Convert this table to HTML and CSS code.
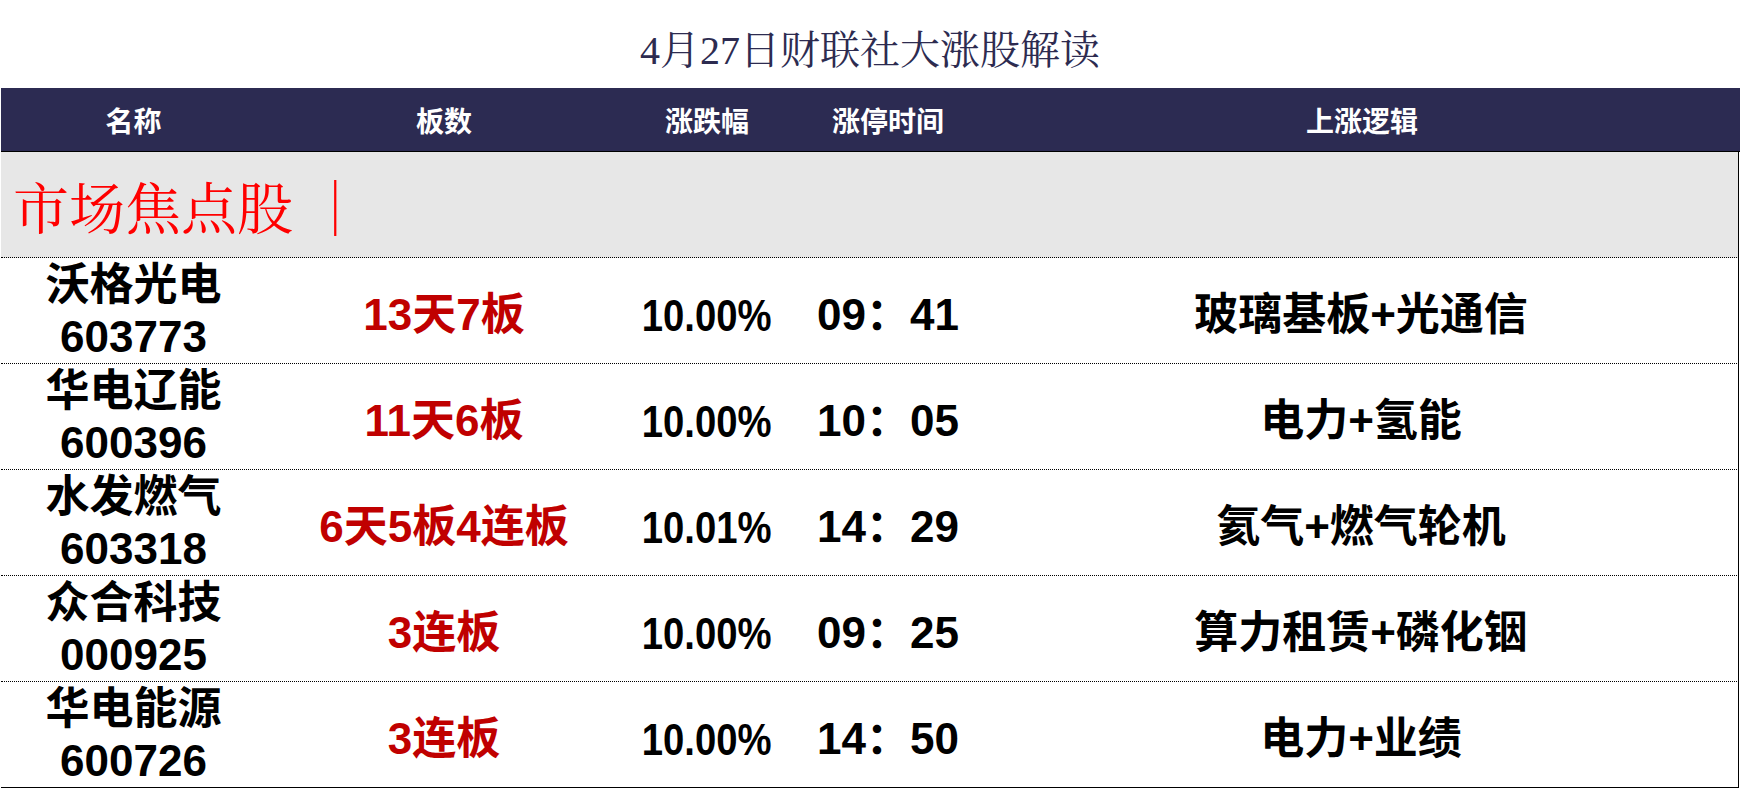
FILE: index.html
```html
<!DOCTYPE html>
<html lang="zh-CN">
<head>
<meta charset="utf-8">
<title>4月27日财联社大涨股解读</title>
<link rel="stylesheet" href="styles.css">
</head>
<body>
<div class="page">
  <div class="title">4月27日财联社大涨股解读</div>
  <div class="table">
    <div class="head">
      <div class="hc">名称</div>
      <div class="hc">板数</div>
      <div class="hc">涨跌幅</div>
      <div class="hc">涨停时间</div>
      <div class="hc">上涨逻辑</div>
    </div>
    <div class="section"><span class="section-text">市场焦点股 ｜</span></div>
    <div class="row">
      <div class="cell name"><span>沃格光电</span><span>603773</span></div>
      <div class="cell board">13天7板</div>
      <div class="cell pct"><span class="narrow">10.00%</span></div>
      <div class="cell time">09：41</div>
      <div class="cell logic">玻璃基板+光通信</div>
    </div>
    <div class="row">
      <div class="cell name"><span>华电辽能</span><span>600396</span></div>
      <div class="cell board">11天6板</div>
      <div class="cell pct"><span class="narrow">10.00%</span></div>
      <div class="cell time">10：05</div>
      <div class="cell logic">电力+氢能</div>
    </div>
    <div class="row">
      <div class="cell name"><span>水发燃气</span><span>603318</span></div>
      <div class="cell board">6天5板4连板</div>
      <div class="cell pct"><span class="narrow">10.01%</span></div>
      <div class="cell time">14：29</div>
      <div class="cell logic">氦气+燃气轮机</div>
    </div>
    <div class="row">
      <div class="cell name"><span>众合科技</span><span>000925</span></div>
      <div class="cell board">3连板</div>
      <div class="cell pct"><span class="narrow">10.00%</span></div>
      <div class="cell time">09：25</div>
      <div class="cell logic">算力租赁+磷化铟</div>
    </div>
    <div class="row last">
      <div class="cell name"><span>华电能源</span><span>600726</span></div>
      <div class="cell board">3连板</div>
      <div class="cell pct"><span class="narrow">10.00%</span></div>
      <div class="cell time">14：50</div>
      <div class="cell logic">电力+业绩</div>
    </div>
  </div>
</div>
</body>
</html>
```

FILE: styles.css
```css
html, body {
  margin: 0;
  padding: 0;
  background: #ffffff;
}

.page {
  width: 1740px;
  height: 788px;
  overflow: hidden;
  font-family: "Liberation Sans", "Noto Sans CJK SC", sans-serif;
}

.title {
  height: 88px;
  display: flex;
  align-items: center;
  justify-content: center;
  padding-top: 4px;
  box-sizing: border-box;
  font-family: "Liberation Serif", "Noto Serif CJK SC", "Noto Sans CJK SC", serif;
  font-weight: 400;
  font-size: 40px;
  color: #2d2b50;
}

.table {
  margin-left: 1px;
}

.head {
  display: grid;
  grid-template-columns: 265px 356px 170px 192px 1fr;
  height: 63px;
  background: #2c2b52;
  border-bottom: 1px solid #000;
}

.hc {
  display: flex;
  align-items: center;
  justify-content: center;
  color: #ffffff;
  font-family: "Noto Sans CJK SC", sans-serif;
  font-weight: 700;
  font-size: 28px;
}

.section {
  height: 105px;
  background: #e7e7e7;
  border-right: 1px solid #000;
  border-bottom: 1px dotted #000;
  width: 1725px;
  display: flex;
  align-items: center;
  padding-left: 12px;
}

.section-text {
  font-family: "Noto Serif CJK SC", "Noto Sans CJK SC", serif;
  font-size: 56px;
  color: #ff0000;
  line-height: 1;
}

.row {
  display: grid;
  grid-template-columns: 265px 356px 170px 192px 1fr;
  height: 105px;
  width: 1737px;
  border-right: 1px solid #000;
  border-bottom: 1px dotted #000;
}

.row.last {
  border-bottom: 1px solid #000;
}

.cell {
  display: flex;
  align-items: center;
  justify-content: center;
  font-weight: 700;
  font-size: 44px;
  color: #000;
  white-space: nowrap;
}

.name {
  flex-direction: column;
  line-height: 52px;
}

.board {
  color: #c00000;
}

.narrow {
  display: inline-block;
  transform: translateY(5px) scaleX(0.87);
}
```
